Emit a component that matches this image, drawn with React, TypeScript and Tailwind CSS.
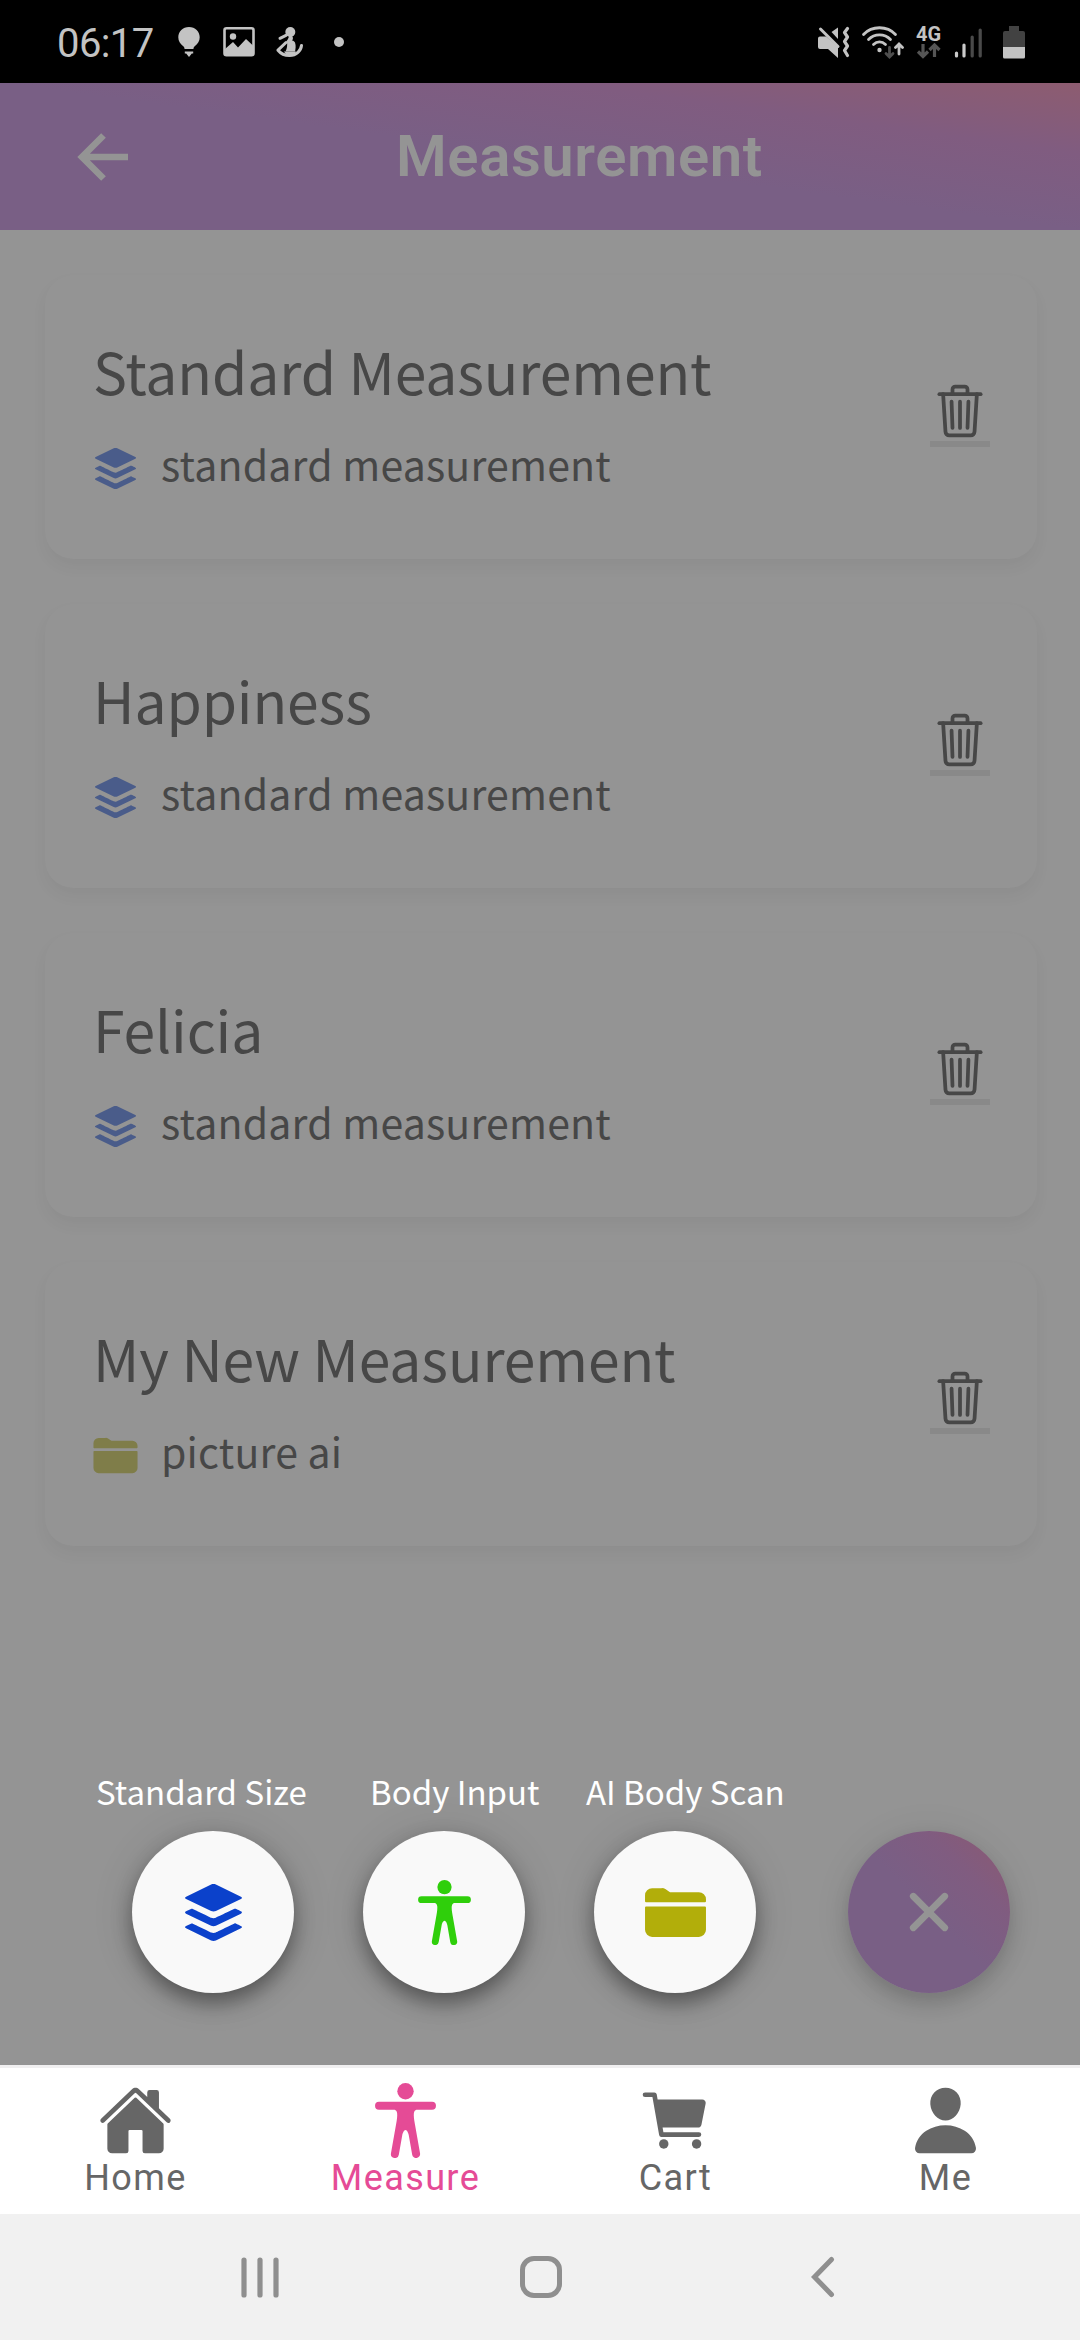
import React from "react";
import {
  IoBody,
  IoCart,
  IoClose,
  IoFolder,
  IoHome,
  IoLogoBuffer,
  IoPerson,
  IoTrashOutline,
} from "react-icons/io5";

type Measurement = { name: string; kind: "standard measurement" | "picture ai" };

const measurements: Measurement[] = [
  { name: "Standard Measurement", kind: "standard measurement" },
  { name: "Happiness", kind: "standard measurement" },
  { name: "Felicia", kind: "standard measurement" },
  { name: "My New Measurement", kind: "picture ai" },
];

function StatusBar() {
  return (
    <div className="flex h-[83px] shrink-0 items-center bg-black pl-[57px] pr-[55px] text-[#c3c3c3]">
      <span className="mt-[3px] w-[96px] font-['Roboto'] text-[40px] leading-[47px] tracking-[-0.6px]">06:17</span>
      <svg className="ml-[24px] h-[32px] w-[24px]" viewBox="0 0 24 32" fill="currentColor">
        <path d="M12 1C5.800 1 1.300 5.600 1.300 11.300c0 3.800 2 6.700 4.700 8.700 1.300 1 1.500 1.700 1.500 3h9c0-1.300.2-2 1.500-3 2.700-2 4.700-4.900 4.700-8.700C22.700 5.600 18.200 1 12 1z" />
        <path d="M7.800 25.600h8.400v2h-1.400L12 31l-2.800-3.400H7.800z" />
      </svg>
      <svg className="ml-[21px] h-[32px] w-[34px]" viewBox="0 0 34 32">
        <rect x="2.500" y="2.300" width="29" height="27" rx="2" fill="none" stroke="currentColor" strokeWidth="2.600" />
        <circle cx="11" cy="10.500" r="3.200" fill="currentColor" />
        <path d="M3 23l8-7 5 5.500 8-8.500 8 7.500V29H3z" fill="currentColor" />
      </svg>
      <svg className="ml-[19px] h-[32px] w-[28px]" viewBox="0 0 28 32" fill="currentColor">
        <circle cx="15.300" cy="6" r="5" />
        <path d="M16 9c4 3 .8 6-.2 7l-4.800 1c.5-3 3-4 3-8z" />
        <path d="M5 12.300l6-3" stroke="currentColor" strokeWidth="3" strokeLinecap="round" />
        <path d="M12 15.500c2.500-2 6.500-1.500 8 1 1.200 3 .5 7 0 9h-9.500c1.500-3 2-6 1.500-10z" />
        <path d="M11 16.500L3 24.200c3 3.800 7 5.300 11.500 5.300 7 0 11.500-5 12-10" fill="none" stroke="currentColor" strokeWidth="3" strokeLinecap="round" strokeLinejoin="round" />
        <path d="M9 25.500h12l-3 4.500h-6z" />
      </svg>
      <span className="ml-[31px] size-[10px] rounded-full bg-[#c3c3c3]" />

      <svg className="ml-auto h-[34px] w-[32px]" viewBox="0 0 32 34" fill="currentColor">
        <path d="M0 13.500Q0 11.500 2 11.500h6L20 22v11L10 24H2q-2 0-2-2z" />
        <path d="M2.500 4L20 21.500" stroke="currentColor" strokeWidth="3" strokeLinecap="round" />
        <path d="M20 2.500V14l-6.500-7z" />
        <path d="M29.500 3.500l-3 4 3 4.500-3 4.500 3 4.500-3 4.500 3 5" fill="none" stroke="currentColor" strokeWidth="3.200" strokeLinecap="round" strokeLinejoin="round" />
      </svg>
      <svg className="ml-[11px] h-[34px] w-[43px]" viewBox="0 0 43 34" fill="none" stroke="currentColor" strokeWidth="2.800" strokeLinecap="round">
        <path d="M2.500 9.500C11 .5 26 .5 34.500 9.500M7.500 14.500c6-6.200 16-6.200 22 0M12.500 19.500c3.500-3.500 8.500-3.500 12 0" />
        <circle cx="18.500" cy="25" r="2.200" fill="currentColor" stroke="none" />
        <path d="M28.500 22.500v9M25 28.500l3.500 3.500 3.500-3.500" stroke="#4e4e4e" />
        <path d="M38 29v-9M34.500 22.500L38 19l3.500 3.500" />
      </svg>
      <div className="ml-[12px] flex w-[25px] flex-col items-center">
        <span className="font-['Roboto'] text-[20px] font-bold leading-[18px]">4G</span>
        <svg className="h-[16px] w-[25px]" viewBox="0 0 25 16" fill="none" stroke="#555555" strokeWidth="3.200">
          <path d="M7 1v12M2 8.500l5 5 5-5M18.500 14V2M13.500 7l5-5 5 5" />
        </svg>
      </div>
      <svg className="ml-[13px] h-[32px] w-[29px]" viewBox="0 0 29 32" strokeWidth="3.200" strokeLinecap="round">
        <path d="M2.500 27v3M10 19v11" stroke="#c9c9c9" />
        <path d="M18.200 11v19M26.200 4v26" stroke="#4a4a4a" />
      </svg>
      <svg className="ml-[20px] h-[34px] w-[22px]" viewBox="0 0 22 34">
        <path d="M6 1h10v5h4q2 0 2 2v14H0V8q0-2 2-2h4z" fill="#424242" />
        <path d="M0 22h22v10q0 1.500-1.500 1.500h-19Q0 33.500 0 32z" fill="#c3c3c3" />
      </svg>
    </div>
  );
}

function Header() {
  return (
    <header className="flex h-[147px] shrink-0 items-center bg-[linear-gradient(to_top_right,#795f85_0%,#795f85_50%,#805c80_76%,#8d5c70_100%)] text-[#949494]">
      <svg className="ml-[76px] h-[50px] w-[53px]" viewBox="0 0 53 50" fill="none" stroke="currentColor" strokeWidth="6.600">
        <path d="M27.500 3.500L6 25l21.500 21.500M6 25h46" />
      </svg>
      <h1 className="-mt-[2px] ml-[267px] font-['Roboto'] text-[58px] font-semibold leading-none tracking-[0.6px]">Measurement</h1>
    </header>
  );
}

function MeasurementCard({ name, kind }: Measurement) {
  return (
    <article className="flex h-[284px] items-center justify-between rounded-[28px] bg-[#949494] pl-[49px] pr-[47px] shadow-[0_8px_16px_rgba(0,0,0,0.045)]">
      <div className="-mt-[14px]">
        <h2 className="-ml-px text-[57px] leading-[84px] tracking-[-0.1px]">{name}</h2>
        <div className="mt-[26px] flex items-center">
          {kind === "picture ai" ? (
            <IoFolder className="-ml-[2px] mt-[6px] size-[47px] text-[#7f7d49]" />
          ) : (
            <IoLogoBuffer className="-ml-[2px] mt-[6px] size-[47px] text-[#4a5c8a]" />
          )}
          <span className="-mt-[5px] ml-[22px] text-[41px] leading-[60px] tracking-[0.2px]">{kind}</span>
        </div>
      </div>
      <button className="mt-[-6px] border-b-[6px] border-[#898989]">
        <IoTrashOutline className="size-[60px]" />
      </button>
    </article>
  );
}

function DialButton({ children }: { children: React.ReactNode }) {
  return (
    <button className="flex size-[162px] items-center justify-center rounded-full bg-[#f9f9f9] shadow-[0_10px_20px_rgba(0,0,0,0.38),0_2px_44px_rgba(0,0,0,0.12)]">
      {children}
    </button>
  );
}

function SpeedDial() {
  return (
    <div className="mb-[72px] mt-auto flex items-end">
      <div className="ml-[96px] flex flex-col gap-[15px]">
        <div className="flex h-[50px] whitespace-nowrap text-[33px] leading-[50px] text-white">
          <span className="w-[274px]">Standard Size</span>
          <span className="w-[216px]">Body Input</span>
          <span className="w-[199px]">AI Body Scan</span>
        </div>
        <div className="flex gap-[69px] pl-[36px]">
          <DialButton>
            <IoLogoBuffer className="size-[65px] text-[#0b41cb]" />
          </DialButton>
          <DialButton>
            <IoBody className="size-[65px] text-[#2fcf0b]" />
          </DialButton>
          <DialButton>
            <IoFolder className="size-[65px] text-[#b2ae0a]" />
          </DialButton>
        </div>
      </div>
      <button className="ml-[63px] flex size-[162px] items-center justify-center rounded-full bg-[linear-gradient(to_top_right,#795f85_0%,#795f85_50%,#805c80_74%,#8d5970_100%)] text-[#949494] shadow-[0_10px_20px_rgba(0,0,0,0.16),0_2px_40px_rgba(0,0,0,0.07)]">
        <IoClose className="size-[72px]" />
      </button>
    </div>
  );
}

const tabs = [
  { label: "Home", Icon: IoHome, active: false },
  { label: "Measure", Icon: IoBody, active: true },
  { label: "Cart", Icon: IoCart, active: false },
  { label: "Me", Icon: IoPerson, active: false },
];

function TabBar() {
  return (
    <nav className="grid h-[149px] shrink-0 grid-cols-4 border-t-[3px] border-[#f0eff0] bg-white">
      {tabs.map(({ label, Icon, active }) => (
        <div
          key={label}
          className={
            active
              ? "flex flex-col items-center pt-[15px] text-[#e54b96]"
              : "flex flex-col items-center pt-[15px] text-[#666666]"
          }
        >
          <Icon className="size-[75px]" />
          <span className="-mt-px ml-px font-['Roboto'] text-[36px] leading-[42px] tracking-[1.4px]">{label}</span>
        </div>
      ))}
    </nav>
  );
}

function SystemNav() {
  return (
    <div className="flex h-[126px] shrink-0 items-center bg-[#f1f1f1] pl-[240px] text-[#8f8f8f]">
      <svg className="h-[42px] w-[40px]" viewBox="0 0 40 42" stroke="currentColor" strokeWidth="5.200" strokeLinecap="round">
        <path d="M4 4v35M20 4v35M36 4v35" />
      </svg>
      <span className="ml-[240px] size-[42px] rounded-[14px] border-[5px] border-[#8f8f8f]" />
      <svg className="ml-[248px] h-[42px] w-[26px]" viewBox="0 0 26 42" fill="none" stroke="currentColor" strokeWidth="5" strokeLinecap="round">
        <path d="M21.500 3.500L4.500 21l17 17.500" />
      </svg>
    </div>
  );
}

export default function App() {
  return (
    <div className="flex h-[2340px] w-[1080px] flex-col overflow-hidden bg-[#949494] font-['Noto_Sans_CJK_SC',sans-serif] text-[#474747]">
      <StatusBar />
      <Header />
      <main className="flex min-h-0 flex-1 flex-col">
        <div className="flex flex-col gap-[45px] pl-[45px] pr-[43px] pt-[45px]">
          {measurements.map((m) => (
            <MeasurementCard key={m.name} {...m} />
          ))}
        </div>
        <SpeedDial />
      </main>
      <TabBar />
      <SystemNav />
    </div>
  );
}
